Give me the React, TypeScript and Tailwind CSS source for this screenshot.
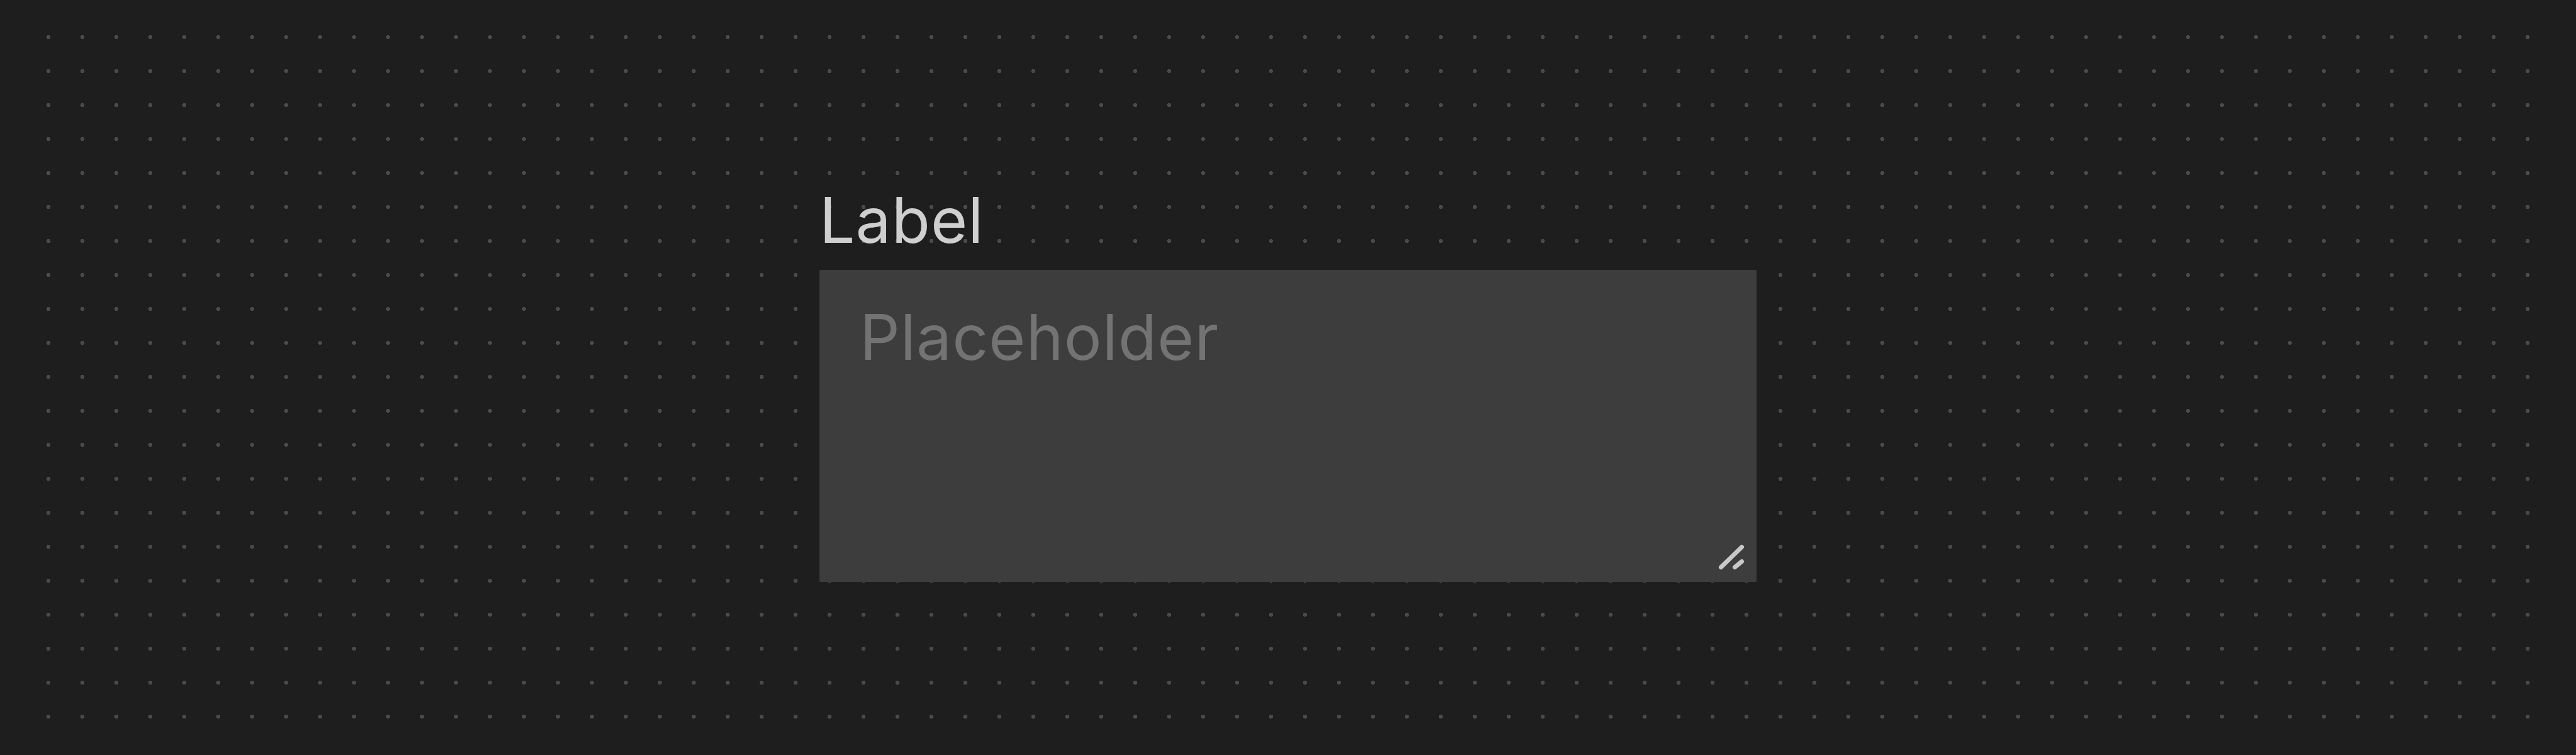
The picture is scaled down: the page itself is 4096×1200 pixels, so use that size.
import { useState } from 'react';

const ResizeGrip = () => (
  <svg
    width="48"
    height="48"
    viewBox="0 0 48 48"
    className="pointer-events-none absolute right-4 bottom-4"
  >
    <g stroke="#c8c8c8" strokeWidth="7" strokeLinecap="round" fill="none">
      <line x1="7.5" y1="40.5" x2="40.5" y2="8.5" />
      <line x1="29.5" y1="40.5" x2="40.5" y2="31.5" />
    </g>
  </svg>
);

export default function App() {
  const [value, setValue] = useState('');

  return (
    <div className="h-[1200px] w-full bg-[#1e1e1e] px-[50px] py-[32px] font-['Inter',sans-serif]">
      <div className="flex h-[1136px] w-full items-center justify-center bg-[radial-gradient(circle,#4a4a4a_3px,transparent_3.5px)] bg-[length:54px_54px]">
        <div className="flex flex-col gap-1">
          <label
            htmlFor="field"
            className="text-[100px] leading-[150px] tracking-[1px] text-[#cfcfcf]"
          >
            Label
          </label>
          <div className="relative">
            <textarea
              id="field"
              value={value}
              onChange={(e) => setValue(e.target.value)}
              placeholder="Placeholder"
              className="block h-[496px] w-[1490px] resize-none bg-[#3d3d3d] pt-[32px] pl-[64px] pr-[64px] text-[100px] leading-[150px] tracking-[1px] text-[#e5e5e5] outline-none placeholder:text-[#737373]"
            />
            <ResizeGrip />
          </div>
        </div>
      </div>
    </div>
  );
}
